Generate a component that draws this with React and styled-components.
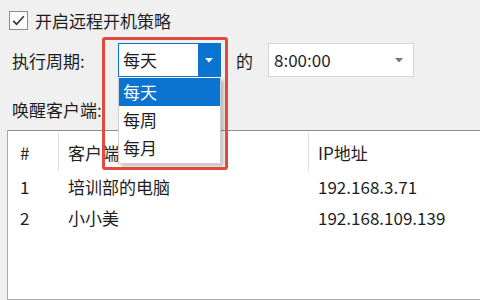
import React from "react";
import styled, { createGlobalStyle } from "styled-components";

const GlobalStyle = createGlobalStyle`
  html, body { margin: 0; padding: 0; }
  body {
    background: #f0f0f0;
    font-family: "Noto Sans CJK SC", "Noto Sans", sans-serif;
    font-size: 17px;
    color: #1e1e1e;
  }
`;

const Page = styled.div`
  position: relative;
  width: 480px;
  height: 300px;
  overflow: hidden;
  background: #f0f0f0;
  display: flex;
  flex-direction: column;
`;

const CheckRow = styled.label`
  display: flex;
  align-items: center;
  gap: 7px;
  margin: 11px 0 0 9px;
  height: 19px;
  line-height: 19px;
`;

const CheckBox = styled.span`
  width: 17px;
  height: 17px;
  border: 1px solid #8a8a8a;
  background: #fbfbfb;
  display: flex;
  align-items: center;
  justify-content: center;
`;

const FormRow = styled.div`
  display: flex;
  align-items: center;
  margin: 13px 0 0 12px;
  height: 34px;
`;

const FieldLabel = styled.span`
  width: 106px;
  flex: none;
`;

const Combo = styled.div`
  display: flex;
  align-items: center;
  width: ${(p) => p.$w}px;
  height: 34px;
  box-sizing: border-box;
  background: #fff;
  border: 1px solid ${(p) => (p.$active ? "#0a74d0" : "#d6d6d6")};
  flex: none;
`;

const ComboText = styled.span`
  flex: 1;
  padding-left: ${(p) => p.$pad}px;
  line-height: 32px;
`;

const ComboButton = styled.span`
  width: ${(p) => p.$w}px;
  align-self: stretch;
  display: flex;
  align-items: center;
  justify-content: center;
  background: ${(p) => (p.$active ? "#0a74d0" : "transparent")};
`;

const Word = styled.span`
  margin: 0 15px;
`;

const SectionLabel = styled.div`
  margin: 22px 0 0 12px;
  height: 22px;
  line-height: 22px;
`;

const ListBox = styled.div`
  margin: 9px 0 0 7px;
  width: 520px;
  height: 200px;
  background: #fff;
  border: 1px solid #a9a9a9;
  border-top-color: #8e8e8e;
  box-sizing: border-box;
`;

const Grid = styled.div`
  display: grid;
  grid-template-columns: 50px 250px 1fr;
`;

const HeadCell = styled.div`
  height: 38px;
  display: flex;
  align-items: center;
  padding-left: ${(p) => p.$pad}px;
  margin-top: 2px;
  border-left: ${(p) => (p.$sep ? "1px solid #e2e2e2" : "none")};
  color: #222;
`;

const Cell = styled.div`
  height: 31px;
  display: flex;
  align-items: center;
  padding-left: ${(p) => p.$pad}px;
  color: #1e1e1e;
`;

const Dropdown = styled.ul`
  position: absolute;
  left: 118px;
  top: 77px;
  width: 103px;
  margin: 0;
  padding: 1px 0 1px;
  list-style: none;
  background: #fff;
  border: 1px solid #cfcfcf;
  border-top: none;
  box-sizing: border-box;
  box-shadow: 3px 3px 3px rgba(0, 0, 0, 0.22);
`;

const Option = styled.li`
  height: 28px;
  line-height: 28px;
  padding-left: 4px;
  background: ${(p) => (p.$selected ? "#0a74d0" : "transparent")};
  color: ${(p) => (p.$selected ? "#fff" : "#1e1e1e")};
`;

const Highlight = styled.div`
  position: absolute;
  left: 102px;
  top: 37px;
  width: 126px;
  height: 133px;
  box-sizing: border-box;
  border: 3px solid #e24a3f;
  border-radius: 3px;
  pointer-events: none;
`;

const Arrow = ({ color }) => (
  <svg width="8" height="5" viewBox="0 0 8 5">
    <path d="M0 0 L8 0 L4 4.5 Z" fill={color} />
  </svg>
);

const rows = [
  ["1", "培训部的电脑", "192.168.3.71"],
  ["2", "小小美", "192.168.109.139"],
];

export default function App() {
  return (
    <>
      <GlobalStyle />
      <Page>
        <CheckRow>
          <CheckBox>
            <svg width="13" height="11" viewBox="0 0 13 11">
              <path d="M1.2 5.8 L4.6 9.2 L11.8 1.2" fill="none" stroke="#3a3a3a" strokeWidth="1.7" />
            </svg>
          </CheckBox>
          开启远程开机策略
        </CheckRow>
        <FormRow>
          <FieldLabel>执行周期:</FieldLabel>
          <Combo $w={103} $active>
            <ComboText $pad={4}>每天</ComboText>
            <ComboButton $w={22} $active>
              <Arrow color="#fff" />
            </ComboButton>
          </Combo>
          <Word>的</Word>
          <Combo $w={146}>
            <ComboText $pad={5}>8:00:00</ComboText>
            <ComboButton $w={28}>
              <Arrow color="#777" />
            </ComboButton>
          </Combo>
        </FormRow>
        <SectionLabel>唤醒客户端:</SectionLabel>
        <ListBox>
          <Grid>
            <HeadCell $pad={12}>#</HeadCell>
            <HeadCell $pad={9} $sep>客户端名称</HeadCell>
            <HeadCell $pad={9} $sep>IP地址</HeadCell>
            {rows.map((r) => (
              <React.Fragment key={r[0]}>
                <Cell $pad={12}>{r[0]}</Cell>
                <Cell $pad={10}>{r[1]}</Cell>
                <Cell $pad={10}>{r[2]}</Cell>
              </React.Fragment>
            ))}
          </Grid>
        </ListBox>
        <Dropdown>
          <Option $selected>每天</Option>
          <Option>每周</Option>
          <Option>每月</Option>
        </Dropdown>
        <Highlight />
      </Page>
    </>
  );
}
